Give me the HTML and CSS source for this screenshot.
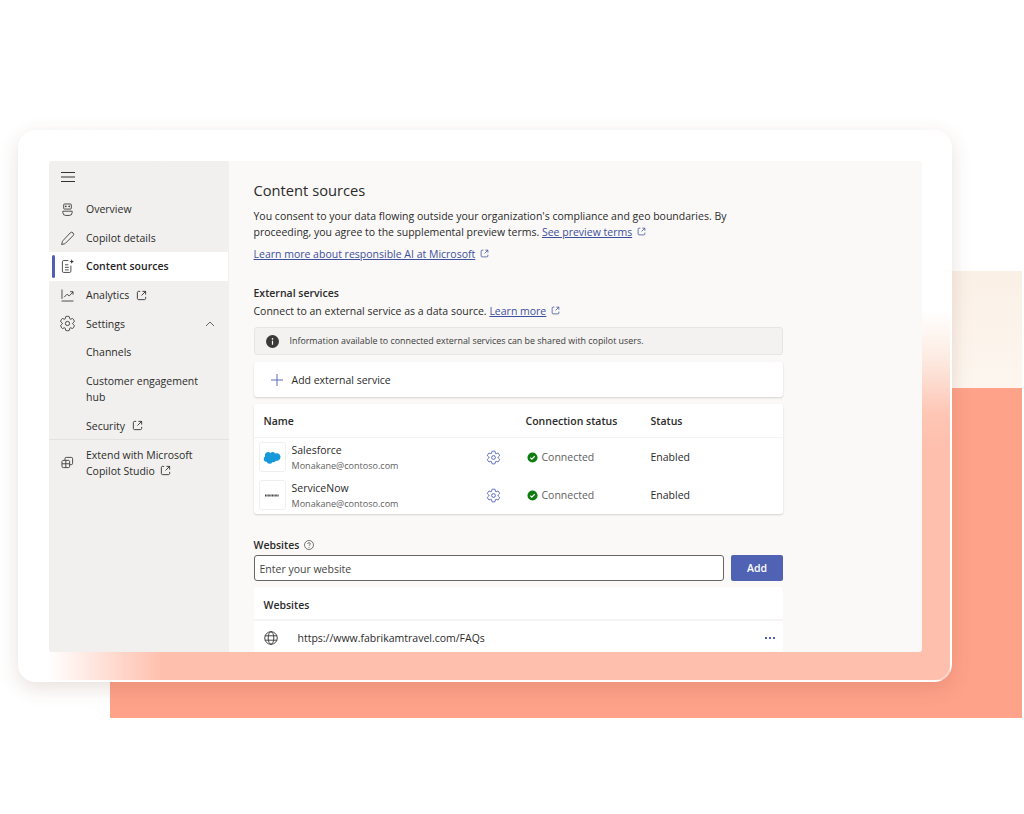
FILE: index.html
```html
<!DOCTYPE html>
<html lang="en">
<head>
  <meta charset="UTF-8" />
  <meta name="viewport" content="width=device-width, initial-scale=1.0" />
  <title>Content sources</title>
  <link rel="stylesheet" href="styles.css">
</head>
<body>
  <!-- Icones reutilizados -->
  <svg class="sprite" aria-hidden="true">
    <symbol id="i-gear" viewBox="0 0 20 20">
      <path fill="none" stroke="currentColor" d="M1.91 7.38A8.5 8.5 0 0 1 3.7 4.3a.5.5 0 0 1 .54-.13l1.92.68a1 1 0 0 0 1.32-.76l.36-2a.5.5 0 0 1 .4-.4 8.53 8.53 0 0 1 3.55 0c.2.04.35.2.38.4l.37 2a1 1 0 0 0 1.32.76l1.92-.68a.5.5 0 0 1 .54.13 8.5 8.5 0 0 1 1.78 3.08c.06.2 0 .4-.15.54l-1.56 1.32a1 1 0 0 0 0 1.52l1.56 1.32a.5.5 0 0 1 .15.54 8.5 8.5 0 0 1-1.78 3.08.5.5 0 0 1-.54.13l-1.92-.68a1 1 0 0 0-1.32.76l-.37 2a.5.5 0 0 1-.38.4 8.53 8.53 0 0 1-3.56 0 .5.5 0 0 1-.39-.4l-.36-2a1 1 0 0 0-1.32-.76l-1.92.68a.5.5 0 0 1-.54-.13 8.5 8.5 0 0 1-1.78-3.08.5.5 0 0 1 .15-.54l1.56-1.32a1 1 0 0 0 0-1.52L2.06 7.92a.5.5 0 0 1-.15-.54Z"/>
      <circle cx="10" cy="10" r="2.5" fill="none" stroke="currentColor"/>
    </symbol>
    <symbol id="i-open" viewBox="0 0 12 12">
      <path fill="none" stroke="currentColor" stroke-width="1" d="M4.5 1.5H2.6c-.6 0-1.1.5-1.1 1.1v6.8c0 .6.5 1.1 1.1 1.1h6.8c.6 0 1.1-.5 1.1-1.1V7.5M7 1.5h3.5V5M10.5 1.5 6 6"/>
    </symbol>
    <symbol id="i-check" viewBox="0 0 12 12">
      <circle cx="6" cy="6" r="5.5" fill="#107c10"/>
      <path fill="none" stroke="#fff" stroke-width="1.3" d="M3.6 6.2 5.2 7.8 8.4 4.6"/>
    </symbol>
  </svg>

  <div class="backdrop"></div>

  <div class="frame">
    <div class="app">
      <!-- Menu lateral -->
      <nav class="sidebar">
        <div class="hamburger">
          <svg width="14" height="12" viewBox="0 0 14 12"><path fill="none" stroke="#333" d="M0 1.5h14M0 6h14M0 10.5h14"/></svg>
        </div>
        <a class="nav-item">
          <svg class="nav-icon" viewBox="0 0 20 20"><path fill="none" stroke="currentColor" d="M6.5 3.5h7a1 1 0 0 1 1 1v4a1 1 0 0 1-1 1h-7a1 1 0 0 1-1-1v-4a1 1 0 0 1 1-1ZM4.5 12h11v1.5a3.5 3.5 0 0 1-3.5 3.5H8a3.5 3.5 0 0 1-3.5-3.5V12Z"/><circle cx="8" cy="6.3" r="1" fill="currentColor"/><circle cx="12" cy="6.3" r="1" fill="currentColor"/></svg>
          <span>Overview</span>
        </a>
        <a class="nav-item">
          <svg class="nav-icon" viewBox="0 0 20 20"><path fill="none" stroke="currentColor" d="M13.2 3.4a2.3 2.3 0 0 1 3.3 3.3L7.6 15.6c-.3.3-.6.5-1 .6l-3.5.9.9-3.5c.1-.4.3-.7.6-1l8.6-9.2Z"/></svg>
          <span>Copilot details</span>
        </a>
        <a class="nav-item active">
          <svg class="nav-icon" viewBox="0 0 20 20"><path fill="none" stroke="currentColor" d="M11 3H5.500A1.500 1.500 0 0 0 4 4.500v11A1.500 1.500 0 0 0 5.500 17h7a1.500 1.500 0 0 0 1.500-1.500V9M7 8h4M7 11h4.500M7 14h4.500"/><path fill="currentColor" d="M15 1.500l.8 1.900 1.900.8-1.900.8-.8 1.900-.8-1.900-1.900-.8 1.900-.8.8-1.900Z"/></svg>
          <span>Content sources</span>
        </a>
        <a class="nav-item">
          <svg class="nav-icon" viewBox="0 0 20 20"><path fill="none" stroke="currentColor" d="M3.500 3v11M3 16.500h14M6 12l3.500-3.500 2.500 2L16.500 6M13 5.500h3.500V9"/></svg>
          <span>Analytics</span>
          <svg class="open-icon" width="11" height="11"><use href="#i-open"/></svg>
        </a>
        <a class="nav-item">
          <svg class="nav-icon"><use href="#i-gear"/></svg>
          <span>Settings</span>
          <svg class="chevron" width="10" height="6" viewBox="0 0 10 6"><path fill="none" stroke="#666" d="M1 5l4-4 4 4"/></svg>
        </a>
        <a class="nav-item sub">Channels</a>
        <a class="nav-item sub two-lines">Customer engagement<br>hub</a>
        <a class="nav-item sub">
          <span>Security</span>
          <svg class="open-icon" width="11" height="11"><use href="#i-open"/></svg>
        </a>
        <a class="nav-item extend">
          <svg class="nav-icon" viewBox="0 0 20 20"><path fill="none" stroke="currentColor" d="M7 7V5.500A1.500 1.500 0 0 1 8.500 4h6A1.500 1.500 0 0 1 16 5.500V11a1.500 1.500 0 0 1-1.500 1.500H13M4.500 7.500H11A1.500 1.500 0 0 1 12.500 9v5.500A1.500 1.500 0 0 1 11 16H5a1.500 1.500 0 0 1-1.500-1.500V8.500l1-1ZM3.500 11.500h9M8 7.500V16"/></svg>
          <span>Extend with Microsoft<br>Copilot Studio <svg class="open-icon inline" width="11" height="11"><use href="#i-open"/></svg></span>
        </a>
      </nav>

      <!-- Conteudo -->
      <main class="content">
        <h1>Content sources</h1>
        <p class="lead">You consent to your data flowing outside your organization's compliance and geo boundaries. By<br>proceeding, you agree to the supplemental preview terms. <a class="link">See preview terms</a> <svg class="open-link" width="9" height="9"><use href="#i-open"/></svg></p>
        <p class="lead-link"><a class="link">Learn more about responsible AI at Microsoft</a> <svg class="open-link" width="9" height="9"><use href="#i-open"/></svg></p>

        <h2>External services</h2>
        <p class="connect">Connect to an external service as a data source. <a class="link">Learn more</a> <svg class="open-link" width="9" height="9"><use href="#i-open"/></svg></p>

        <div class="info-bar">
          <svg width="13" height="13" viewBox="0 0 13 13"><circle cx="6.500" cy="6.500" r="6.500" fill="#3b3a39"/><rect x="5.900" y="5.700" width="1.200" height="4" fill="#fff"/><circle cx="6.500" cy="3.900" r=".8" fill="#fff"/></svg>
          <span>Information available to connected external services can be shared with copilot users.</span>
        </div>

        <div class="add-card">
          <svg width="12" height="12" viewBox="0 0 12 12"><path fill="none" stroke="#5b6bb8" d="M6 0v12M0 6h12"/></svg>
          <span>Add external service</span>
        </div>

        <div class="table-card">
          <div class="table-row table-head">
            <span class="col-name">Name</span>
            <span class="col-conn">Connection status</span>
            <span>Status</span>
          </div>
          <div class="table-row">
            <div class="col-name service">
              <div class="logo">
                <svg width="18" height="13" viewBox="0 0 18 13"><path fill="#1798d8" d="M7.400 2.100A3 3 0 0 1 9.600 1.100c1.100 0 2.100.6 2.600 1.500.5-.2 1-.3 1.500-.3 2.100 0 3.800 1.700 3.800 3.800s-1.700 3.800-3.800 3.800c-.3 0-.5 0-.8-.1a2.700 2.700 0 0 1-3.500 1.100 3.100 3.100 0 0 1-5.800-.2c-.2 0-.4.100-.6.100A2.900 2.900 0 0 1 .7 7.900c0-1.100.6-2 1.400-2.500A3.300 3.300 0 0 1 5 .9c1 0 1.800.5 2.400 1.200Z"/></svg>
              </div>
              <div class="service-text">
                <span class="service-name">Salesforce</span>
                <span class="service-mail">Monakane@contoso.com</span>
              </div>
              <svg class="row-gear"><use href="#i-gear"/></svg>
            </div>
            <span class="col-conn connected"><svg width="11" height="11"><use href="#i-check"/></svg>Connected</span>
            <span>Enabled</span>
          </div>
          <div class="table-row">
            <div class="col-name service">
              <div class="logo">
                <svg width="14" height="3" viewBox="0 0 14 3"><path fill="none" stroke="#444" stroke-width="2" stroke-dasharray="1 .4" d="M0 1.500h14"/></svg>
              </div>
              <div class="service-text">
                <span class="service-name">ServiceNow</span>
                <span class="service-mail">Monakane@contoso.com</span>
              </div>
              <svg class="row-gear"><use href="#i-gear"/></svg>
            </div>
            <span class="col-conn connected"><svg width="11" height="11"><use href="#i-check"/></svg>Connected</span>
            <span>Enabled</span>
          </div>
        </div>

        <div class="field-label">
          <span>Websites</span>
          <svg width="10" height="10" viewBox="0 0 10 10"><circle cx="5" cy="5" r="4.500" fill="none" stroke="#555" stroke-width=".8"/><path fill="none" stroke="#555" stroke-width=".8" d="M3.600 4c0-.8.600-1.300 1.400-1.300s1.400.5 1.400 1.200c0 1-1.400 1-1.400 2"/><circle cx="5" cy="7.200" r=".5" fill="#555"/></svg>
        </div>
        <div class="field-row">
          <div class="text-input">Enter your website</div>
          <button class="add-button">Add</button>
        </div>

        <div class="sites-card">
          <div class="sites-head">Websites</div>
          <div class="sites-row">
            <svg width="14" height="14" viewBox="0 0 14 14"><g fill="none" stroke="#333" stroke-width=".9"><circle cx="7" cy="7" r="6.300"/><ellipse cx="7" cy="7" rx="2.800" ry="6.300"/><path d="M1 4.800h12M1 9.200h12"/></g></svg>
            <span class="sites-url">https://www.fabrikamtravel.com/FAQs</span>
            <span class="dots"><i></i><i></i><i></i></span>
          </div>
        </div>
      </main>
    </div>
  </div>
</body>
</html>
```
FILE: styles.css
```css
/* Reset basico */
* {
  box-sizing: border-box;
  margin: 0;
  padding: 0;
}

body {
  position: relative;
  width: 1024px;
  height: 814px;
  overflow: hidden;
  background: #fff;
  color: #2b2b2b;
  font-family: "Open Sans", "Noto Sans", sans-serif;
  font-size: 10.5px;
  line-height: 16px;
}

.sprite {
  display: none;
}

/* Fundo decorativo atras do cartao */
.backdrop {
  position: absolute;
  left: 110px;
  top: 271px;
  width: 912px;
  height: 447px;
  background: linear-gradient(to bottom, #faf0e6 0, #fdf6ef 117px, #ffa28a 117px);
}

/* Cartao translucido */
.frame {
  position: absolute;
  left: 18px;
  top: 130px;
  width: 934px;
  height: 552px;
  padding: 31px;
  border-radius: 18px;
  background:
    linear-gradient(to right, #fff 30px, rgba(255, 255, 255, 0) 145px),
    linear-gradient(to bottom, #fff 180px, #fdeee5 223px, #fdd8cb 257px, #fec6b5 283px, #ffbfad 320px);
  border-right: 2px solid rgba(255, 255, 255, 0.35);
  border-bottom: 2px solid rgba(255, 255, 255, 0.35);
  box-shadow: 0 6px 20px rgba(120, 60, 40, 0.16);
}

.app {
  display: flex;
  width: 873px;
  height: 491px;
  overflow: hidden;
  border-radius: 3px;
  background: #faf9f7;
}

/* Menu lateral */
.sidebar {
  flex: 0 0 180px;
  background: #f1f0ee;
  padding-top: 4px;
}

.hamburger {
  height: 30px;
  padding: 6px 0 0 12px;
}

.nav-item {
  position: relative;
  display: flex;
  align-items: center;
  height: 28.6px;
  padding-left: 37px;
  margin-right: 1px;
}

.nav-icon {
  position: absolute;
  left: 10px;
  top: 6px;
  width: 17px;
  height: 17px;
  color: #333;
}

.nav-item.active {
  background: #fff;
  font-weight: 600;
  color: #1f1f1f;
}

.nav-item.active::before {
  content: "";
  position: absolute;
  left: 3px;
  top: 3px;
  width: 3px;
  height: 23px;
  border-radius: 2px;
  background: #4f5fb5;
}

.open-icon {
  margin-left: 7px;
  color: #333;
}

.open-icon.inline {
  margin-left: 2px;
  vertical-align: -1px;
}

.chevron {
  margin-left: auto;
  margin-right: 13px;
}

.nav-item.two-lines {
  height: 45px;
}

.nav-item.extend {
  height: 46px;
  margin: 0;
  margin-top: -1px;
  border-top: 1px solid #e3e2e0;
  padding-top: 1px;
}

.nav-item.extend .nav-icon {
  top: 14px;
}

/* Conteudo */
.content {
  flex: 1;
  padding: 19px 0 0 24.5px;
  min-width: 0;
}

.content > * {
  width: 529.5px;
}

h1 {
  font-size: 14.7px;
  font-weight: 500;
  line-height: 20px;
  margin-bottom: 8px;
}

.lead {
  width: 560px;
  white-space: nowrap;
}

.lead-link {
  margin-top: 6px;
}

.link {
  color: #3e4f9e;
  text-decoration: underline;
}

.open-link {
  margin-left: 2px;
  vertical-align: 0;
  color: #3e4f9e;
}

h2 {
  font-size: 10.5px;
  font-weight: 600;
  line-height: 16px;
  margin-top: 23px;
}

.connect {
  margin-top: 2px;
}

.info-bar {
  display: flex;
  align-items: center;
  gap: 11px;
  height: 28px;
  margin-top: 8px;
  padding-left: 11px;
  border: 1px solid #e6e5e3;
  border-radius: 3px;
  background: #f3f2f0;
  font-size: 8.9px;
  color: #3a3a3a;
}

.add-card {
  display: flex;
  align-items: center;
  gap: 9px;
  height: 35px;
  margin-top: 7px;
  padding-left: 17px;
  border-radius: 3px;
  background: #fff;
  box-shadow: 0 1px 2px rgba(0, 0, 0, 0.16);
}

.table-card {
  margin-top: 7px;
  height: 110px;
  border-radius: 3px;
  background: #fff;
  box-shadow: 0 1px 2px rgba(0, 0, 0, 0.16);
}

.table-row {
  display: flex;
  align-items: center;
  height: 38px;
}

.table-head {
  height: 34px;
  border-bottom: 1px solid #f5f4f2;
  padding-top: 1px;
  font-weight: 600;
}

.col-name {
  flex: 0 0 272px;
  padding-left: 10px;
}

.col-conn {
  flex: 0 0 125px;
}

.service {
  display: flex;
  align-items: center;
  padding-left: 5px;
}

.logo {
  display: flex;
  align-items: center;
  justify-content: center;
  width: 27px;
  height: 30px;
  border: 1px solid #f0efed;
  border-radius: 3px;
}

.service-text {
  display: flex;
  flex-direction: column;
  margin-top: 1px;
  margin-left: 6px;
}

.service-name {
  line-height: 15px;
}

.service-mail {
  font-size: 9.05px;
  line-height: 15px;
  color: #616161;
}

.row-gear {
  width: 15px;
  height: 15px;
  margin-left: auto;
  margin-right: 25px;
  color: #4f5fb5;
  stroke-width: 1.25;
}

.connected {
  display: flex;
  align-items: center;
  gap: 4px;
  padding-left: 1px;
  color: #616161;
}

.field-label {
  display: flex;
  align-items: center;
  gap: 5px;
  margin-top: 23px;
  font-weight: 600;
}

.field-row {
  display: flex;
  gap: 7px;
  margin-top: 2px;
}

.text-input {
  flex: 1;
  height: 26px;
  padding: 5px 5px;
  border: 1px solid #666;
  border-radius: 3px;
  background: #fff;
  color: #444;
}

.add-button {
  flex: 0 0 52px;
  border: none;
  border-radius: 2px;
  background: #5062b4;
  color: #fff;
  font: 600 10.5px "Open Sans", "Noto Sans", sans-serif;
}

.sites-card {
  margin-top: 6px;
  background: #fff;
  border-radius: 3px 3px 0 0;
}

.sites-head {
  height: 34px;
  padding: 10px 0 0 10px;
  border-bottom: 2px solid #f5f4f2;
  font-weight: 600;
}

.sites-row {
  display: flex;
  align-items: center;
  height: 34px;
  padding: 0 8px 0 10px;
}

.sites-url {
  margin-left: 20px;
}

.dots {
  display: flex;
  gap: 2px;
  margin-left: auto;
}

.dots i {
  width: 2px;
  height: 2px;
  background: #4f5fb5;
}
```
